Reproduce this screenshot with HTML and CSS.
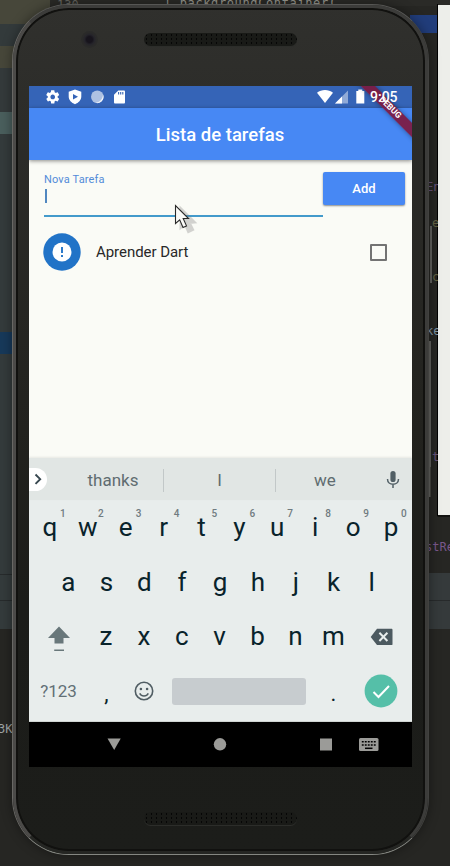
FILE: index.html
```
<!DOCTYPE html>
<html lang="pt-BR">
<head>
<meta charset="utf-8">
<title>Lista de tarefas</title>
<link rel="stylesheet" href="styles.css">
</head>
<body>
<div class="desktop">
  <div class="editor-left"></div>
  <svg class="editor-code" width="450" height="866" viewBox="0 0 450 866">
    <rect x="50" y="0" width="400" height="6" fill="#2a2a27"/>
    <rect x="410" y="15" width="28" height="18" fill="#213d7b"/>
    <rect x="428" y="573" width="22" height="56" fill="#353a3b"/>
    <path d="M428 600.500h22" stroke="#272a2b"/>
    <path d="M0 600.500h13M0 574.500h13" stroke="#272b2c"/>
    <path d="M431 226v57M430 341v126M429.500 467v30" stroke="#62625f" stroke-width="2"/>
    <path d="M437.500 4v512H450" stroke="#000" fill="none"/>
    <g class="code">
      <text x="57" y="9" fill="#666660">130</text>
      <text x="164" y="7" fill="#999990" textLength="172">| backgroundContainer(</text>
      <text x="426" y="191" fill="#655078">En</text>
      <text x="432" y="227" fill="#626344">e</text>
      <text x="432" y="281" fill="#626344">c</text>
      <text x="426" y="335" fill="#8195a5">ke</text>
      <text x="432" y="461" fill="#655078">t</text>
      <text x="425" y="551" fill="#79578b">stRe</text>
      <text x="-2" y="733" fill="#a0a4a4">3K</text>
    </g>
  </svg>
  <div class="side-window"></div>
  <div class="phone">
    <div class="rim"></div>
    <div class="forehead"><span class="camera"></span><span class="speaker"></span></div>
    <main class="screen">
      <div class="statusbar">
        <svg width="90" height="22" viewBox="0 0 90 22" fill="#fff">
          <g transform="translate(0.800,3) scale(.66)"><path d="M19.430 12.980c.04-.32.07-.64.07-.98s-.03-.66-.07-.98l2.110-1.650c.19-.15.24-.42.12-.64l-2-3.460c-.12-.22-.39-.3-.61-.22l-2.490 1c-.52-.4-1.080-.73-1.690-.98l-.38-2.650C14.460 2.180 14.250 2 14 2h-4c-.25 0-.46.18-.49.42l-.38 2.650c-.61.25-1.170.59-1.690.98l-2.490-1c-.23-.09-.49 0-.61.22l-2 3.460c-.13.22-.07.49.12.64l2.110 1.650c-.04.32-.07.65-.07.98s.03.66.07.98l-2.110 1.650c-.19.15-.24.42-.12.64l2 3.460c.12.22.39.3.61.22l2.490-1c.52.4 1.080.73 1.690.98l.38 2.650c.03.24.24.42.49.42h4c.25 0 .46-.18.49-.42l.38-2.650c.61-.25 1.170-.59 1.690-.98l2.490 1c.23.09.49 0 .61-.22l2-3.460c.12-.22.07-.49-.12-.64l-2.110-1.650zM12 15.500c-1.930 0-3.500-1.570-3.500-3.500s1.570-3.500 3.500-3.500 3.500 1.570 3.500 3.500-1.570 3.500-3.500 3.500z"/></g>
          <path fill-rule="evenodd" d="M31 3.500l6.300 2.300v4.700c0 3.500-2.700 6.300-6.300 7.700-3.600-1.400-6.300-4.200-6.300-7.700V5.800zM29 8v5.600l5-2.800z"/>
          <circle cx="53.300" cy="10.800" r="6.300" opacity=".6"/>
          <path d="M59 8.300a6.300 6.300 0 0 1-7.700 8.500c4 .2 7.800-3.800 7.700-8.500z" opacity=".85"/>
          <path d="M74.300 4.500h5.500c.8 0 1.200.4 1.200 1.200v10.600c0 .8-.4 1.200-1.200 1.200h-8.600c-.8 0-1.200-.4-1.200-1.200V8.800z"/>
          <path d="M74.600 6v2.500M76.700 6v2.500M78.800 6v2.500" stroke="#3564b4" stroke-width="1.100"/>
        </svg>
        <div class="status-right">
          <svg width="52" height="22" viewBox="0 0 52 22" fill="#fff">
            <path d="M1 6.700C5.500 3 12.500 3 17 6.700L9 17z"/>
            <path d="M32 4.500V17.500H19z" opacity=".45"/><path d="M26 10.500v7h-7z"/>
            <path d="M42.300 3.500h4v1.600h2v12.500h-8V5.100h2z"/>
          </svg>
          <span class="clock">9:05</span>
        </div>
      </div>
      <header class="appbar">Lista de tarefas</header>
      <section class="content">
        <div class="form">
          <div class="field"><label>Nova Tarefa</label><span class="caret"></span></div>
          <button class="add">Add</button>
        </div>
        <div class="task">
          <svg width="38" height="38" viewBox="0 0 38 38"><circle cx="19" cy="19" r="18.700" fill="#2173c7"/><circle cx="19" cy="19" r="9.500" fill="#fff"/><path d="M19 14v6M19 22v2" stroke="#2173c7" stroke-width="1.900"/></svg>
          <span class="task-name">Aprender Dart</span>
          <span class="checkbox"></span>
        </div>
      </section>
      <section class="keyboard">
        <div class="suggestions">
          <span class="expand"><svg width="18" height="23" viewBox="0 0 18 23"><path d="M6.500 6.500l4.700 4.700-4.700 4.700" fill="none" stroke="#37474f" stroke-width="1.900"/></svg></span>
          <span class="word first">thanks</span><span class="word">I</span><span class="word last">we</span>
          <svg class="mic" width="14" height="20" viewBox="0 0 14 20"><rect x="4.400" y="1" width="5.200" height="11" rx="2.600" fill="#526066"/><path d="M1.500 9c0 7 11 7 11 0M7 14v4" fill="none" stroke="#526066" stroke-width="1.500"/></svg>
        </div>
        <div class="keys">
          <span>q<sup>1</sup></span><span>w<sup>2</sup></span><span>e<sup>3</sup></span><span>r<sup>4</sup></span><span>t<sup>5</sup></span><span>y<sup>6</sup></span><span>u<sup>7</sup></span><span>i<sup>8</sup></span><span>o<sup>9</sup></span><span>p<sup>0</sup></span>
        </div>
        <div class="keys middle"><span>a</span><span>s</span><span>d</span><span>f</span><span>g</span><span>h</span><span>j</span><span>k</span><span>l</span></div>
        <div class="keys lower">
          <span class="wide shift"><svg width="24" height="28" viewBox="0 0 24 28" fill="#68777a"><path d="M12 2.500L23 14h-6.500v5.500h-9V14H1z"/><path d="M7.200 25.500h9.800v1.500H7.200z"/></svg></span>
          <span>z</span><span>x</span><span>c</span><span>v</span><span>b</span><span>n</span><span>m</span>
          <span class="wide"><svg width="24" height="20" viewBox="0 0 24 20"><path d="M7 1.700h14.300c.8 0 1.200.4 1.200 1.200v14c0 .8-.4 1.200-1.200 1.200H7L.7 9.900z" fill="#4c5a60"/><path d="M9.400 5.800l8 8.200M17.400 5.800l-8 8.200" stroke="#e8edec" stroke-width="2"/></svg></span>
        </div>
        <div class="keys bottom">
          <span class="symbols">?123</span><span class="comma">,</span>
          <span class="emoji"><svg width="20" height="20" viewBox="0 0 20 20"><circle cx="10" cy="10" r="8.700" fill="none" stroke="#505d63" stroke-width="1.600"/><circle cx="6.900" cy="8" r="1.300" fill="#505d63"/><circle cx="13.100" cy="8" r="1.300" fill="#505d63"/><path d="M5.700 12.300c1.700 3.500 6.900 3.500 8.600 0" fill="none" stroke="#505d63" stroke-width="1.500"/></svg></span>
          <span class="space"></span><span class="period">.</span>
          <span class="enter"><svg width="34" height="34" viewBox="0 0 34 34"><circle cx="17" cy="17" r="16.400" fill="#55bfa8"/><path d="M9.500 18l5 5L25 12" fill="none" stroke="#fff" stroke-width="2"/></svg></span>
        </div>
      </section>
      <nav class="navbar">
        <svg width="383" height="45" viewBox="0 0 383 45" fill="#9b9b98"><path d="M78.500 16.500h13.200L85.200 28z"/><circle cx="191" cy="22.300" r="6.200"/><rect x="291" y="16.500" width="12" height="12"/><rect x="330" y="16" width="19.500" height="13" rx="1.500"/><path d="M332.800 19.800h14M332.800 23h14" stroke="#000" stroke-width="1.600" stroke-dasharray="1.900 1.100"/><path d="M336 26.300h7.500" stroke="#000" stroke-width="1.500"/></svg>
      </nav>
      <div class="debug-banner"><span>DEBUG</span></div>
    </main>
    <div class="chin"><span class="speaker"></span></div>
  </div>
  <svg class="pointer" width="26" height="34" viewBox="0 0 26 34"><path d="M7 5v18l4-3.500 3.500 8 4-2-3.500-7 5-.5z" fill="#777" opacity=".3" stroke="#777" stroke-width="3"/><path d="M1.500 1.500v18l4.200-3.700 3.300 7.700 3.500-1.600-3.300-7.400h5.300z" fill="#fafaf7" stroke="#292929" stroke-width="1.100"/></svg>
</div>
</body>
</html>
```
FILE: styles.css
```
* { box-sizing: border-box; }
body { margin: 0; font-family: Roboto, sans-serif; }
.desktop {
  position: relative; width: 450px; height: 866px; overflow: hidden; background: #262623;
}
.editor-left {
  width: 50px; height: 629px;
  background: linear-gradient(#47473a 0 24px, #333a3b 24px 46px, #47473a 46px 68px, #343a3b 68px 112px, #4a5f5d 112px 134px, #343b3c 134px 332px, #17395a 332px 354px, #343b3c 354px);
}
.editor-code { position: absolute; left: 0; top: 0; }
.code { font: 12px "DejaVu Sans Mono", monospace; }
.side-window { position: absolute; left: 438px; top: 5px; width: 12px; height: 510px; background: #edeeea; }
.phone {
  position: absolute; left: 12px; top: 4px; width: 417px; height: 851px; padding: 0 16px;
  border-radius: 57px; background: linear-gradient(#30302d, #22221e 50%, #1b1c19 70%, #1c1d1a);
  border: 1px solid #686764; border-top-color: #565654; border-right-color: #41413f; border-bottom-color: #858782;
  box-shadow: 0 0 12px rgba(0,0,0,.4);
}
.rim {
  position: absolute; inset: 0; border-radius: 56px; border: 3px solid #3c3c3a;
  border-left-color: #4b4a48; border-bottom-color: #252623; box-shadow: inset 0 0 0 2px #11110f;
}
.forehead { height: 81px; position: relative; display: flex; justify-content: center; padding-top: 28px; }
.camera {
  position: absolute; left: 52px; top: 26px; width: 17px; height: 17px; border-radius: 50%;
  background: radial-gradient(circle, #17141c 0 3px, #25242a 5px, #2a2a29 7px);
}
.speaker {
  width: 153px; height: 13px; border-radius: 7px; background-color: #191a17;
  background-image: radial-gradient(#060606 .8px, transparent 1.200px); background-size: 5px 4px;
  box-shadow: 0 1px 0 #2c2d2a;
}
.screen { position: relative; width: 383px; height: 681px; display: flex; flex-direction: column; overflow: hidden; background: #fafbf6; }
.statusbar { height: 22px; display: flex; justify-content: space-between; padding: 0 15px; background: #3564b7; }
.status-right { display: flex; }
.clock { position: relative; z-index: 3; margin-left: 2px; font-size: 14px; line-height: 23px; font-weight: 500; color: #fff; width: 27px; }
.appbar {
  height: 52px; flex: none; line-height: 54px; text-align: center; font-size: 18.500px; font-weight: 500; color: #fff;
  background: #4788f4; box-shadow: 0 1px 4px rgba(0,0,0,.45); z-index: 1; padding-right: 1px;
}
.content { height: 298px; flex: none; padding: 12px 7px 0 15px; }
.form { display: flex; align-items: flex-start; }
.field { width: 279px; height: 45px; border-bottom: 2px solid #439acb; display: flex; flex-direction: column; }
.field label { font-size: 11px; line-height: 15px; color: #528bd9; letter-spacing: .15px; }
.caret { width: 2px; height: 14px; margin: 2px 0 0 1px; background: #5087c0; }
.add {
  width: 82px; height: 33px; border: 0; border-radius: 2px; background: #4788f4; color: #fff;
  font: 500 13px Roboto, sans-serif; box-shadow: 0 1px 2px rgba(0,0,0,.45); padding: 0;
}
.task { display: flex; align-items: center; height: 38px; margin: 16px 18px 0 -1px; }
.task-name { flex: 1; margin-left: 15px; font-size: 15px; letter-spacing: -.05px; color: #282828; }
.checkbox { width: 17px; height: 17px; border: 2px solid #737373; border-radius: 1px; }
.keyboard { height: 264px; flex: none; background: #e8edec; border-bottom: 1px solid #cfd4d2; }
.suggestions { height: 42px; padding-top: 2px; display: flex; align-items: center; background: #e1e6e4; box-shadow: 0 -1px 2px rgba(0,0,0,.08); }
.expand { width: 18px; height: 23px; margin-top: -1px; border-radius: 0 12px 12px 0; background: #fff; }
.expand svg { display: block; }
.word { width: 112px; height: 23px; line-height: 23px; text-align: center; font-size: 17px; color: #606c70; border-right: 1px solid #c2c8c8; }
.word.first { width: 117px; padding-left: 16px; }
.word.last { width: 98px; border: 0; }
.mic { margin-left: 12px; }
.keys { display: flex; height: 54.500px; padding: 0 2px; line-height: 54px; color: #09232b; font-size: 26px; }
.keys span { width: 37.900px; flex: none; text-align: center; position: relative; }
.keys sup { position: absolute; left: 29px; top: 8px; font-size: 10px; line-height: 12px; font-weight: 500; color: #707b80; }
.keys.middle { padding-left: 20.500px; }
.keys .wide { width: 56.800px; display: flex; align-items: center; justify-content: center; }
.keys .shift { width: 58px; padding: 3px 0 0 1px; }
.keys.lower { padding: 0; line-height: 55px; }
.keys.lower .wide:last-child { padding: 2px 0 0 3px; }
.keys.bottom { padding: 0; height: 54px; line-height: 55px; }
.keys .symbols { width: 59px; font-size: 17px; color: #627076; }
.keys .comma { width: 37px; line-height: 60px; font-size: 22px; }
.keys .emoji { width: 38px; display: flex; align-items: center; justify-content: center; }
.keys .space { width: 134px; height: 27px; margin: 14px 0 0 9px; border-radius: 3px; background: #c7cccf; }
.keys .period { width: 55px; font-size: 22px; line-height: 60px; }
.keys .enter { width: 40px; display: flex; align-items: center; justify-content: center; padding-top: 1px; }
.navbar { height: 45px; background: #000; }
.navbar svg { display: block; }
.debug-banner {
  position: absolute; z-index: 2; top: 0; right: 0; width: 60px; height: 60px; overflow: hidden;
}
.debug-banner span {
  position: absolute; left: -12.500px; top: 16.500px; width: 100px; height: 9.500px; line-height: 9.500px;
  background: rgba(126,23,61,.9); color: #fff; font-size: 8.500px; font-weight: 700; text-align: center;
  transform: rotate(45deg); box-shadow: 0 0 5px rgba(0,0,0,.4);
}
.chin { display: flex; justify-content: center; padding-top: 45px; }
.pointer { position: absolute; left: 174px; top: 204px; }
```
